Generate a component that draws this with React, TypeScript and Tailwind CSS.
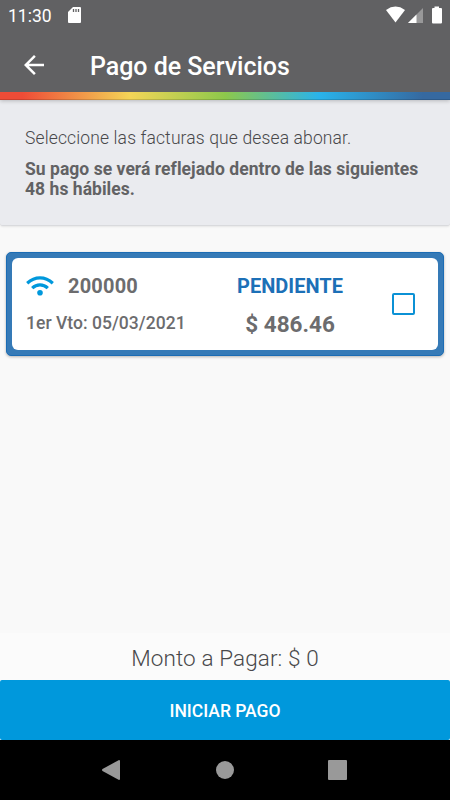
import { useState } from 'react';

interface Invoice {
  id: string;
  dueDate: string;
  status: string;
  amount: number;
}

const invoices: Invoice[] = [
  { id: '200000', dueDate: '05/03/2021', status: 'PENDIENTE', amount: 486.46 },
];

function StatusBar() {
  return (
    <div className="flex h-[30px] items-center justify-between pl-2 pr-[8px] text-white">
      <div className="flex items-center">
        <span className="w-[60px] pt-px text-[17.5px] leading-[30px]">11:30</span>
        <svg width="13" height="16" viewBox="0 0 13 16" fill="none">
          <path d="M5 0H12Q13 0 13 1V15Q13 16 12 16H1Q0 16 0 15V5Z" fill="#fff" />
          <path d="M5.5 2V5M8 2V5M10.5 2V5" stroke="#616163" strokeWidth="1.3" />
        </svg>
      </div>
      <svg width="56" height="18" viewBox="0 0 56 18" fill="#fff">
        <path d="M0 4Q9.500 -2.800 19 4L9.500 16.500Z" />
        <path d="M37 2V17H22Z" fill="#989899" />
        <path d="M30.500 8.500V17H22Z" />
        <path d="M48.500 0.500H53V2H55Q56 2 56 3V16.500Q56 17.500 55 17.500H47Q46 17.500 46 16.500V3Q46 2 47 2H48.500Z" />
      </svg>
    </div>
  );
}

function Header() {
  return (
    <header className="relative z-10 bg-[#616163] shadow-[0_1px_4px_rgba(0,0,0,0.22)]">
      <StatusBar />
      <div className="flex h-[62px] items-center pl-[19px] pt-[8px] text-white">
        <button aria-label="Volver" className="mr-[41px]">
          <svg width="30" height="30" viewBox="0 0 24 24" fill="#fff">
            <path d="M20 11H7.830l5.590-5.590L12 4l-8 8 8 8 1.410-1.410L7.830 13H20v-2z" />
          </svg>
        </button>
        <h1 className="pt-[3px] text-[25px] leading-[30px] font-medium tracking-[-0.04px]">Pago de Servicios</h1>
      </div>
      <div className="h-2 bg-[linear-gradient(90deg,#ee4c37_0%,#ee4c37_5%,#f3d557_29%,#8dc84b_50%,#29b3eb_71%,#3669a0_94%,#3669a0_100%)]">
        <div className="h-full border-b border-black/15" />
      </div>
    </header>
  );
}

function WifiIcon() {
  return (
    <svg width="28" height="20" viewBox="0 0 28 20" fill="none" stroke="#0098dc" strokeWidth="3.2">
      <path d="M1.200 7.200Q7 1.900 14 1.900T26.800 7.200" />
      <path d="M6.200 12.200Q9.600 8.900 14 8.900T21.800 12.200" />
      <circle cx="14" cy="16.700" r="2.800" fill="#0098dc" stroke="none" />
    </svg>
  );
}

interface InvoiceCardProps {
  invoice: Invoice;
  selected: boolean;
  onToggle: () => void;
}

function InvoiceCard({ invoice, selected, onToggle }: InvoiceCardProps) {
  return (
    <div className="rounded-[5px] border border-[#1b6cb4] bg-[#357ab7] p-[5px] shadow-[0_1px_3px_rgba(0,0,0,0.28)]">
      <div className="flex h-[92px] rounded-[6px] bg-white pl-[14px] font-bold text-[#6c6c6e]">
        <div className="w-[184px] pt-[14px]">
          <div className="flex h-[28px] items-center">
            <WifiIcon />
            <span className="ml-[14px] text-[20px] leading-[28px] tracking-[0.2px]">{invoice.id}</span>
          </div>
          <div className="mt-[11px] text-[17.500px] leading-[25px] font-medium tracking-[0.04px]">
            1er Vto: {invoice.dueDate}
          </div>
        </div>
        <div className="w-[160px] pt-[14px] text-center">
          <div className="text-[20px] leading-[28px] text-[#1c70b7]">{invoice.status}</div>
          <div className="mt-[10px] text-[22.500px] leading-[28px]">$ {invoice.amount}</div>
        </div>
        <button
          role="checkbox"
          aria-checked={selected}
          aria-label="Seleccionar factura"
          onClick={onToggle}
          className="mt-[35px] ml-[22px] flex h-[22px] w-[23px] items-center justify-center rounded-[2px] border-2 border-[#0b91d5]"
        >
          {selected && <span className="h-3 w-3 bg-[#0098dc]" />}
        </button>
      </div>
    </div>
  );
}

function NavigationBar() {
  return (
    <nav className="flex h-[60px] items-center bg-black pl-[102px]">
      <svg width="19" height="20" viewBox="0 0 19 20" fill="#999">
        <path d="M17 0Q18 0 18 1V19Q18 20 17 20L0.500 11Q-0.500 10 0.500 9Z" />
      </svg>
      <div className="ml-[95px] h-[18px] w-[18px] rounded-full bg-[#999]" />
      <div className="ml-[94px] h-[20px] w-[19px] rounded-[1px] bg-[#999]" />
    </nav>
  );
}

export default function App() {
  const [selected, setSelected] = useState<string[]>([]);

  const toggle = (id: string) => {
    setSelected((prev) => (prev.includes(id) ? prev.filter((s) => s !== id) : [...prev, id]));
  };

  const total = invoices
    .filter((i) => selected.includes(i.id))
    .reduce((sum, i) => sum + i.amount, 0);

  return (
    <div className="flex h-[800px] w-[450px] flex-col overflow-hidden bg-[#f9f9f9] font-['Roboto',sans-serif]">
      <Header />
      <section className="h-[126px] rounded-b-[3px] border-b border-[#d9dadd] bg-[#eaebef] px-[25px] pt-[27px] text-[#626264] shadow-[0_1px_2px_rgba(0,0,0,0.08)]">
        <p className="text-[17.500px] leading-[22px] font-light tracking-[0.13px] text-[#48484a]">
          Seleccione las facturas que desea abonar.
        </p>
        <p className="mt-[10px] text-[17.500px] leading-[20px] font-bold tracking-[0.04px]">
          Su pago se verá reflejado dentro de las siguientes
          <br />
          48 hs hábiles.
        </p>
      </section>
      <main className="flex-1 px-[6px] pt-[26px]">
        {invoices.map((invoice) => (
          <InvoiceCard
            key={invoice.id}
            invoice={invoice}
            selected={selected.includes(invoice.id)}
            onToggle={() => toggle(invoice.id)}
          />
        ))}
      </main>
      <footer>
        <div className="h-[47px] bg-[#fbfbfb] pt-[11px] text-center text-[22.500px] leading-[28px] font-light tracking-[0.1px] text-[#48484a]">
          Monto a Pagar: $ {total}
        </div>
        <button className="block h-[60px] w-full rounded-[2px] bg-[#0098dc] pt-[2px] text-[17.500px] font-medium text-white">
          INICIAR PAGO
        </button>
      </footer>
      <NavigationBar />
    </div>
  );
}
